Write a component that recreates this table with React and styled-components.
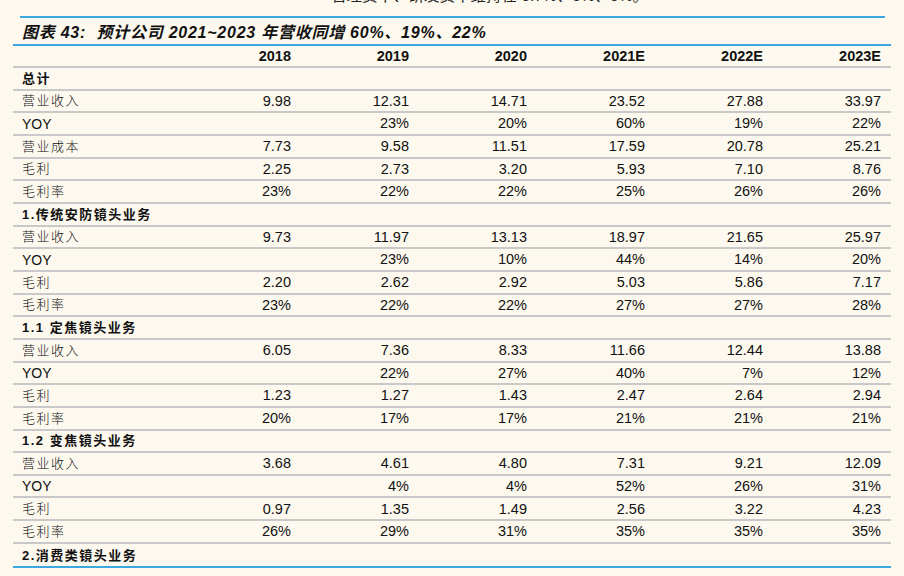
import React from "react";
import styled, { createGlobalStyle } from "styled-components";

const BLUE = "#3aa9e2";
const BG = "#fdf9ef";

const GlobalStyle = createGlobalStyle`
  html, body { margin: 0; padding: 0; background: ${BG}; }
  body { font-family: "Liberation Sans", Arial, "Noto Sans CJK SC", sans-serif; color: #111; }
`;

const Page = styled.div`
  width: 904px;
  height: 576px;
  overflow: hidden;
  background: ${BG};
`;

const Lead = styled.div`
  height: 16px;
  overflow: hidden;
  padding-left: 331px;
`;

const LeadLine = styled.div`
  margin-top: -13px;
  font-size: 15.5px;
  line-height: 18px;
  white-space: nowrap;
  color: #222;
  font-family: "Liberation Sans", "Noto Sans CJK SC", sans-serif;
`;

const Caption = styled.div`
  margin: 0 19px 0 20px;
  border-top: 2px solid ${BLUE};
  height: 26px;
  display: flex;
  align-items: center;
  padding-left: 2px;
  font-family: "Liberation Sans", "Noto Sans CJK SC", sans-serif;
  font-size: 16px;
  letter-spacing: 0.75px;
  font-weight: 700;
  font-style: italic;
  color: #111;
  white-space: nowrap;
`;

const Table = styled.div`
  margin: 0 13px;
  width: 878px;
  border-top: 2px solid ${BLUE};
  border-bottom: 2px solid ${BLUE};
`;

const Row = styled.div`
  display: grid;
  grid-template-columns: 170px repeat(6, 118px);
  align-items: center;
  box-sizing: border-box;
  height: ${(p) => (p.$head ? "22px" : "22.67px")};
  border-bottom: ${(p) => (p.$last ? "none" : "2px solid #c9c9c9")};
`;

const Label = styled.span`
  padding-left: 9px;
  font-family: "Liberation Sans", "Noto Sans CJK SC", sans-serif;
  font-size: ${(p) => (p.$latin ? "14px" : "13px")};
  letter-spacing: ${(p) => (p.$latin ? "0" : "1.5px")};
  font-weight: ${(p) => (p.$bold ? 700 : p.$latin ? 400 : 300)};
  color: #111;
  white-space: nowrap;
  line-height: 1;
`;

const Num = styled.span`
  text-align: right;
  padding-right: 10px;
  font-size: 14.5px;
  font-weight: ${(p) => (p.$bold ? 700 : 400)};
  color: #111;
  line-height: 1;
`;

const years = ["2018", "2019", "2020", "2021E", "2022E", "2023E"];

const rows = [
  { label: "总计", bold: true },
  { label: "营业收入", v: ["9.98", "12.31", "14.71", "23.52", "27.88", "33.97"] },
  { label: "YOY", latin: true, v: ["", "23%", "20%", "60%", "19%", "22%"] },
  { label: "营业成本", v: ["7.73", "9.58", "11.51", "17.59", "20.78", "25.21"] },
  { label: "毛利", v: ["2.25", "2.73", "3.20", "5.93", "7.10", "8.76"] },
  { label: "毛利率", v: ["23%", "22%", "22%", "25%", "26%", "26%"] },
  { label: "1.传统安防镜头业务", bold: true },
  { label: "营业收入", v: ["9.73", "11.97", "13.13", "18.97", "21.65", "25.97"] },
  { label: "YOY", latin: true, v: ["", "23%", "10%", "44%", "14%", "20%"] },
  { label: "毛利", v: ["2.20", "2.62", "2.92", "5.03", "5.86", "7.17"] },
  { label: "毛利率", v: ["23%", "22%", "22%", "27%", "27%", "28%"] },
  { label: "1.1 定焦镜头业务", bold: true },
  { label: "营业收入", v: ["6.05", "7.36", "8.33", "11.66", "12.44", "13.88"] },
  { label: "YOY", latin: true, v: ["", "22%", "27%", "40%", "7%", "12%"] },
  { label: "毛利", v: ["1.23", "1.27", "1.43", "2.47", "2.64", "2.94"] },
  { label: "毛利率", v: ["20%", "17%", "17%", "21%", "21%", "21%"] },
  { label: "1.2 变焦镜头业务", bold: true },
  { label: "营业收入", v: ["3.68", "4.61", "4.80", "7.31", "9.21", "12.09"] },
  { label: "YOY", latin: true, v: ["", "4%", "4%", "52%", "26%", "31%"] },
  { label: "毛利", v: ["0.97", "1.35", "1.49", "2.56", "3.22", "4.23"] },
  { label: "毛利率", v: ["26%", "29%", "31%", "35%", "35%", "35%"] },
  { label: "2.消费类镜头业务", bold: true },
];

export default function App() {
  return (
    <Page>
      <GlobalStyle />
      <Lead>
        <LeadLine>管理费率、研发费率维持在 6.7%、5%、5%。</LeadLine>
      </Lead>
      <Caption>图表 43:&nbsp; 预计公司 2021~2023 年营收同增 60%、19%、22%</Caption>
      <Table>
        <Row $head>
          <span />
          {years.map((y) => (
            <Num key={y} $bold>
              {y}
            </Num>
          ))}
        </Row>
        {rows.map((r, i) => (
          <Row key={i} $last={i === rows.length - 1}>
            <Label $bold={r.bold} $latin={r.latin}>
              {r.label}
            </Label>
            {(r.v || ["", "", "", "", "", ""]).map((x, j) => (
              <Num key={j}>{x}</Num>
            ))}
          </Row>
        ))}
      </Table>
    </Page>
  );
}
